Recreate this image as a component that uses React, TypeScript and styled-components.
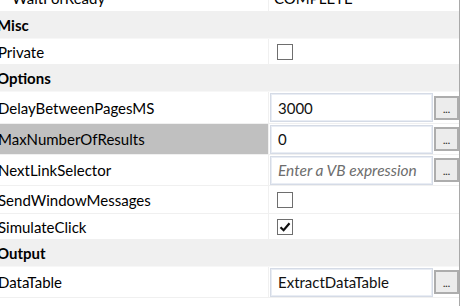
import styled, { createGlobalStyle } from "styled-components";

const Global = createGlobalStyle`
  html, body {
    margin: 0;
    padding: 0;
    background: #fff;
    overflow: hidden;
  }
  body {
    font-family: Lato, "Open Sans", sans-serif;
    font-size: 15px;
    color: #000;
  }
`;

const Panel = styled.div`
  width: 462px;
  height: 306px;
  overflow: hidden;
  display: flex;
`;

const Grid = styled.div`
  width: 459px;
  border-right: 1px solid #a9a9a9;
  margin-top: -16px;
`;

const Row = styled.div<{ $h: number }>`
  display: flex;
  height: ${(p) => p.$h}px;
  border-bottom: 1px solid #f0f0f0;
  box-sizing: border-box;
`;

const Header = styled.div`
  height: 27px;
  box-sizing: border-box;
  background: #f0f0f0;
  border-bottom: 1px solid #f7f7f7;
  font-weight: 700;
  display: flex;
  align-items: center;
  text-indent: -3px;
`;

const Label = styled.div<{ $active?: boolean; $indent?: number }>`
  width: 269px;
  flex: none;
  box-sizing: border-box;
  border-right: 1px solid #f0f0f0;
  background: ${(p) => (p.$active ? "#c0c0c0" : "transparent")};
  display: flex;
  align-items: center;
  padding-left: ${(p) => p.$indent ?? 0}px;
  text-indent: -2px;
  white-space: nowrap;
`;

const Value = styled.div`
  flex: 1;
  display: flex;
  align-items: center;
  padding-left: 1px;
  min-width: 0;
`;

const PlainText = styled.span`
  padding-left: 4px;
`;

const Box = styled.div`
  width: 16px;
  height: 16px;
  box-sizing: border-box;
  border: 1px solid #6e6e6e;
  margin-left: 7px;
  display: flex;
  align-items: center;
  justify-content: center;
`;

const Input = styled.div<{ $placeholder?: boolean }>`
  width: 163px;
  height: 29px;
  box-sizing: border-box;
  border: 1px solid #d5dbe6;
  box-shadow: inset 0 0 0 1px #e9edf4;
  background: #fff;
  display: flex;
  align-items: center;
  padding-left: 7px;
  font-size: ${(p) => (p.$placeholder ? "15.5px" : "15px")};
  color: ${(p) => (p.$placeholder ? "#6d6d6d" : "#111")};
  font-style: ${(p) => (p.$placeholder ? "italic" : "normal")};
  white-space: nowrap;
  overflow: hidden;
`;

const Dots = styled.button`
  width: 25px;
  height: 24px;
  box-sizing: border-box;
  margin-left: 1px;
  border: 2px solid #adadad;
  background: #ececec;
  padding: 0 0 3px;
  font-family: inherit;
  font-size: 10px;
  font-weight: 700;
  color: #333;
  display: flex;
  align-items: flex-end;
  justify-content: center;
`;

const Check = () => (
  <svg width="12" height="12" viewBox="0 0 12 12">
    <path d="M1.5 6.2 L4.6 9.2 L10.5 2.2" fill="none" stroke="#111" strokeWidth="2.2" />
  </svg>
);

const Field = ({ text, placeholder }: { text: string; placeholder?: boolean }) => (
  <>
    <Input $placeholder={placeholder}>{text}</Input>
    <Dots>...</Dots>
  </>
);

export default function App() {
  return (
    <Panel>
      <Global />
      <Grid>
        <Row $h={28}>
          <Label $indent={14}>WaitForReady</Label>
          <Value>
            <PlainText>COMPLETE</PlainText>
          </Value>
        </Row>
        <Header>Misc</Header>
        <Row $h={26}>
          <Label>Private</Label>
          <Value>
            <Box />
          </Value>
        </Row>
        <Header>Options</Header>
        <Row $h={32}>
          <Label>DelayBetweenPagesMS</Label>
          <Value>
            <Field text="3000" />
          </Value>
        </Row>
        <Row $h={31}>
          <Label $active>MaxNumberOfResults</Label>
          <Value>
            <Field text="0" />
          </Value>
        </Row>
        <Row $h={31}>
          <Label>NextLinkSelector</Label>
          <Value>
            <Field text="Enter a VB expression" placeholder />
          </Value>
        </Row>
        <Row $h={28}>
          <Label>SendWindowMessages</Label>
          <Value>
            <Box />
          </Value>
        </Row>
        <Row $h={26}>
          <Label>SimulateClick</Label>
          <Value>
            <Box>
              <Check />
            </Box>
          </Value>
        </Row>
        <Header>Output</Header>
        <Row $h={31}>
          <Label>DataTable</Label>
          <Value>
            <Field text="ExtractDataTable" />
          </Value>
        </Row>
      </Grid>
    </Panel>
  );
}
